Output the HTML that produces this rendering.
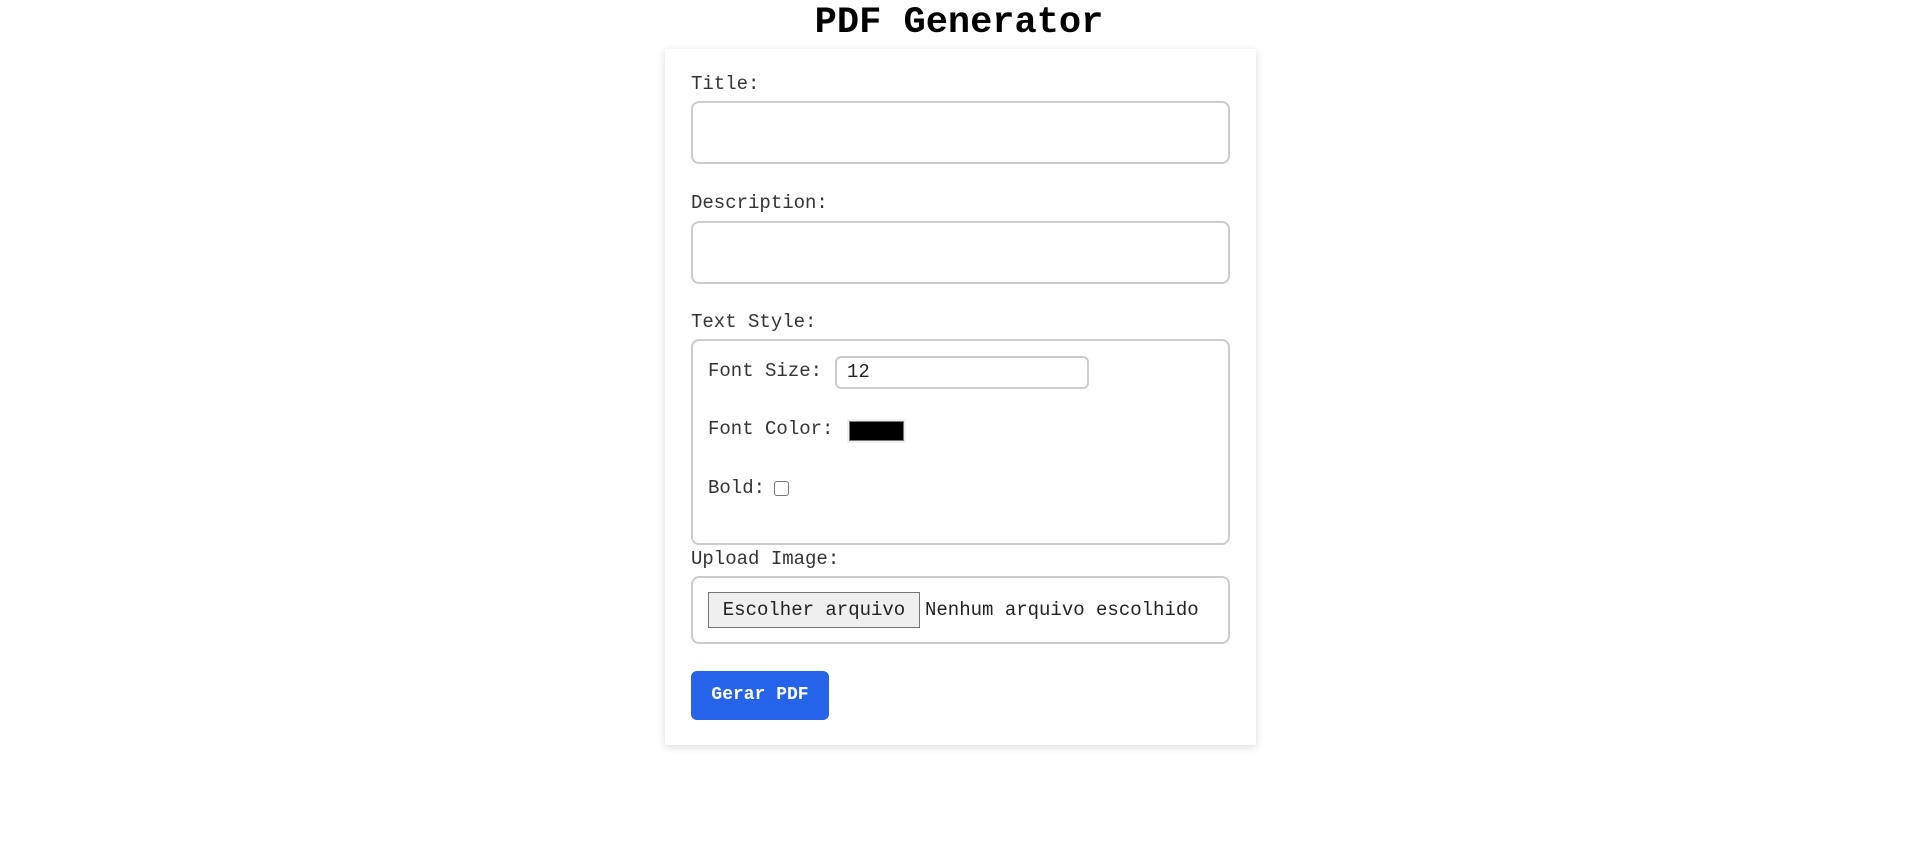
<!DOCTYPE html>
<html><head><meta charset="utf-8"><style>
body{margin:0;width:1918px;height:867px;background:#fff;font-family:"Liberation Mono","Courier New",monospace;position:relative;overflow:hidden;color:#333}
.a{position:absolute}
h1{position:absolute;margin:0;left:0;width:1918px;top:3px;text-align:center;font-size:37px;font-weight:bold;color:#000;line-height:40px}
.card{left:665px;top:49px;width:591px;height:696px;background:#fff;box-shadow:0 2px 8px rgba(0,0,0,0.15)}
.lbl{font-size:19px;line-height:22px;color:#333}
.box{border:2px solid #ccc;border-radius:8px;box-sizing:border-box}
</style></head><body>
<h1>PDF Generator</h1>
<div class="a card"></div>
<div class="a lbl" style="left:691px;top:73px">Title:</div>
<div class="a box" style="left:691px;top:101px;width:539px;height:63px"></div>
<div class="a lbl" style="left:691px;top:192px">Description:</div>
<div class="a box" style="left:691px;top:221px;width:539px;height:63px"></div>
<div class="a lbl" style="left:691px;top:311px">Text Style:</div>
<div class="a box" style="left:691px;top:339px;width:539px;height:206px"></div>
<div class="a lbl" style="left:708px;top:360px">Font Size:</div>
<div class="a box" style="left:835px;top:356px;width:254px;height:33px;border-radius:6px;font-size:19px;line-height:29px;padding-left:10px;color:#222">12</div>
<div class="a lbl" style="left:708px;top:418px">Font Color:</div>
<div class="a" style="left:847px;top:419px;width:59px;height:24px;background:#f0f0f0"><div style="margin:2px 2px;height:20px;background:#000;border:1px solid #777;box-sizing:border-box"></div></div>
<div class="a lbl" style="left:708px;top:477px">Bold:</div>
<div class="a" style="left:774px;top:481px;width:13px;height:13px;border:1px solid #767676;border-radius:3px;background:#fff"></div>
<div class="a lbl" style="left:691px;top:548px">Upload Image:</div>
<div class="a box" style="left:691px;top:576px;width:539px;height:68px"></div>
<div class="a" style="left:708px;top:592px;width:212px;height:36px;background:#efefef;border:1px solid #767676;box-sizing:border-box;font-size:19px;line-height:34px;text-align:center;color:#222">Escolher arquivo</div>
<div class="a lbl" style="left:925px;top:599px;color:#222">Nenhum arquivo escolhido</div>
<div class="a" style="left:691px;top:671px;width:138px;height:49px;background:#2563eb;border-radius:6px;color:#fff;font-weight:bold;font-size:18px;line-height:49px;text-align:center">Gerar PDF</div>
</body></html>
